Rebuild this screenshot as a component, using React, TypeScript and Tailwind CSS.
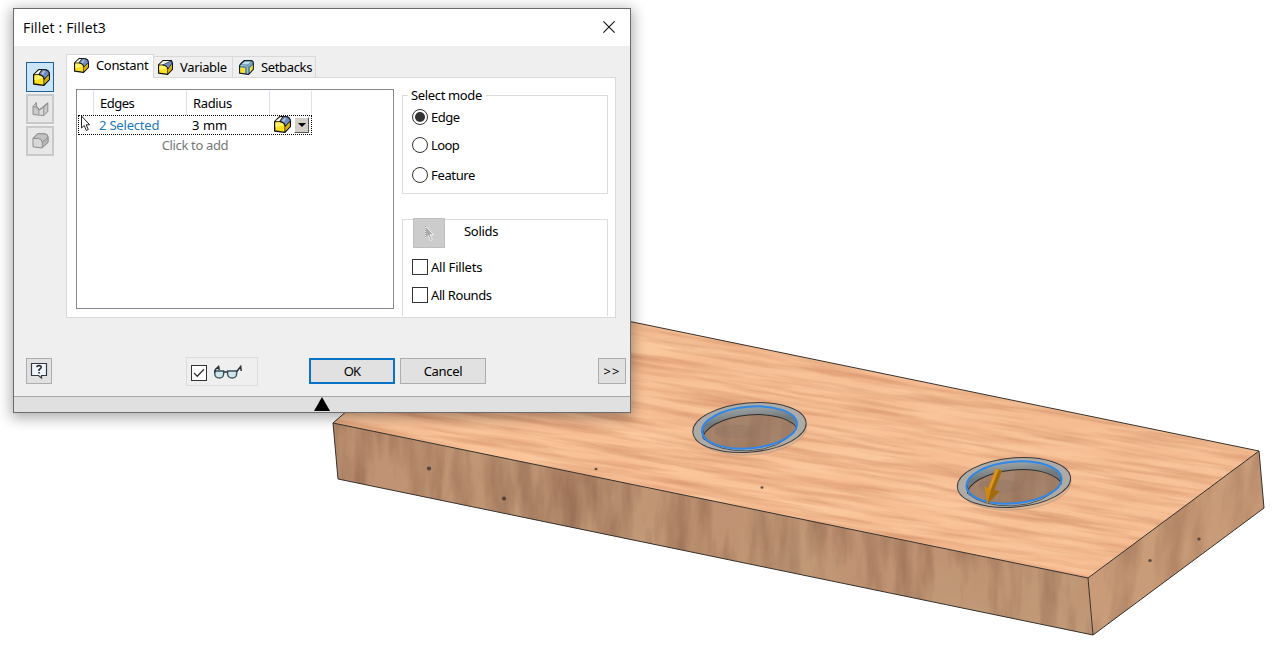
import type { ReactNode } from 'react';

type BlockKind = 'constant' | 'variable' | 'setback';

function BlockIcon({ kind = 'constant', size = 15 }: { kind?: BlockKind; size?: number }) {
  return (
    <svg width={size} height={size} viewBox="0 0 15 15" className="block shrink-0" strokeLinejoin="round">
      {kind === 'constant' && (
        <>
          <path d="M.6 5 5 .6H10.6Q14 1 14.4 4.4V9.4L9.6 14.4 .6 13.2Z" fill="#ffe21f" stroke="#111" strokeWidth="1.2" />
          <path d="M1.2 4.7 5.3 1.1H7.6L4.6 4.7Z" fill="#fffef0" />
          <path d="M5 4.8 8 .7H10.6Q13.9 1.1 14.4 4.4L9.9 9.2Q9.4 5.4 5 4.8Z" fill="#6f8dc0" stroke="#1d2433" strokeWidth=".9" />
          <path d="M7 4.5 9.2 1.6H10.8L8.8 5.4Z" fill="#aebfdd" />
          <path d="M.8 5H5Q9.700 5.4 9.700 9.400V14" fill="none" stroke="#111" strokeWidth=".8" />
          <path d="M1.3 5.8H5Q7.600 6.2 8.500 8.200L1.300 10Z" fill="#fff46a" />
          <path d="M10.300 9.600 13.700 6V9L10.300 12.700Z" fill="#d9ad00" />
        </>
      )}
      {kind === 'variable' && (
        <>
          <path d="M.6 5 5 .6H13.4L14.4 3V9.4L9.6 14.4 .6 13.2Z" fill="#ffe21f" stroke="#111" strokeWidth="1.2" />
          <path d="M4.200 4.800 13.200.8 14.2 3 9.900 9.200Q9.400 5.4 4.200 4.800Z" fill="#6f8dc0" stroke="#1d2433" strokeWidth=".9" />
          <path d="M1.2 4.700 5.300 1.1H12L4.200 4.700Z" fill="#f4f6ee" />
          <path d="M.8 5H4.500Q9.700 5.4 9.700 9.400V14" fill="none" stroke="#111" strokeWidth=".8" />
          <path d="M1.3 5.8H4.500Q7.600 6.2 8.500 8.200L1.300 10Z" fill="#fff46a" />
          <path d="M10.300 9.800 13.700 5V9L10.300 12.700Z" fill="#d9ad00" />
        </>
      )}
      {kind === 'setback' && (
        <>
          <path d="M.6 5.4Q1.4 3.8 5 .7H12Q14.3 1 14.3 3V9.4L9.6 14.4 .6 13.2Z" fill="#5f8ba5" stroke="#121e26" strokeWidth="1.2" />
          <path d="M2.600 4.300 6 1.4H12L9 4.4Z" fill="#c0dcea" />
          <path d="M1.2 7.400 6 7.900V13.200L1.2 12.600Z" fill="#ffe21f" />
          <path d="M11 8 13.700 5V9L11 12.200Z" fill="#ffe21f" />
          <path d="M1.4 5.6Q7.600 4.800 8.400 7.500V13.700M8.400 6.500 13.500 2.300" fill="none" stroke="#a8cbd8" strokeWidth=".9" />
        </>
      )}
    </svg>
  );
}

function GrayFace() {
  return (
    <svg width="17" height="16" viewBox="0 0 17 16" className="block" strokeLinejoin="round">
      <path d="M1 5.5 3 5.8Q5.5 7 7 9L12 6.2 15.8 1.8V10.6L11.7 14.6 1 13.5Z" fill="#c9c9c9" stroke="#8d8d8d" />
      <path d="M1 5.5 4.3 1.5V5.7Q6.5 5.5 7 9L15.5 2M11.7 6.4V14.4M4.2 6V3.2M7 9V13.6" fill="none" stroke="#8d8d8d" />
      <path d="M7.5 9.8 11.2 7.6V13.8L7.5 13.4Z" fill="#dadada" />
    </svg>
  );
}

function GrayRound() {
  return (
    <svg width="17" height="16" viewBox="0 0 17 16" className="block" strokeLinejoin="round">
      <path d="M1 5.4 5.4 .8 12.8.7Q16 1.2 16 4.2V9.4L10 15 1 13.8Z" fill="#d8d8d8" stroke="#8d8d8d" />
      <path d="M1.2 5.4 5.6 .8H12.8Q16 1.2 16 4.2L10.200 9.600Q9.900 5.800 6.500 5.500Z" fill="#c2c2c2" stroke="#8d8d8d" />
      <path d="M10.2 9.6V14.800L16 9.4V4.400Z" fill="#b5b5b5" stroke="#8d8d8d" strokeWidth=".8" />
    </svg>
  );
}

function Tab({ kind, active, className, children }: { kind: BlockKind; active?: boolean; className: string; children: ReactNode }) {
  return (
    <div
      className={`flex items-center border border-b-0 border-[#d9d9d9] ${active ? 'z-10 -mb-px h-6 bg-white pb-[3px]' : 'h-[21px] border-l-0 bg-[#efefef]'} ${className}`}
    >
      <BlockIcon kind={kind} />
      <span className="ml-[7px]">{children}</span>
    </div>
  );
}

function Radio({ label, checked, className = '' }: { label: string; checked?: boolean; className?: string }) {
  return (
    <label className={`flex h-4 items-center gap-[3px] ${className}`}>
      <span className="flex size-4 items-center justify-center rounded-full border border-[#333] bg-white">
        {checked && <span className="size-[10px] rounded-full bg-[#333]" />}
      </span>
      <span>{label}</span>
    </label>
  );
}

function Check({ label, className = '' }: { label: string; className?: string }) {
  return (
    <label className={`flex h-4 items-center gap-[3px] ${className}`}>
      <span className="size-4 border border-[#333] bg-white" />
      <span>{label}</span>
    </label>
  );
}

function Hole({ x, y, arrow }: { x: number; y: number; arrow?: boolean }) {
  return (
    <g transform={`translate(${x} ${y})`}>
      <ellipse cx="1" cy="2.5" rx="56" ry="25" transform="rotate(-4)" fill="#cdb096" fillOpacity=".6" stroke="#c09a78" strokeWidth=".7" />
      <ellipse rx="56.8" ry="24.6" transform="rotate(-5)" fill="#aeaaa5" stroke="#3c3c3c" strokeWidth="1" />
      <ellipse rx="48" ry="21" transform="rotate(-5)" fill="url(#bore)" />
      <clipPath id={`bore${x}`}>
        <ellipse rx="48" ry="21" transform="rotate(-5)" />
      </clipPath>
      <g clipPath={`url(#bore${x})`}>
        <ellipse cx="0" cy="9" rx="48" ry="21.5" transform="rotate(-5)" fill="#a6836b" stroke="#2e2e2e" strokeWidth="1" />
        <g clipPath="url(#lower)">
          <rect x="-50" y="-25" width="100" height="50" filter="url(#grainUp)" opacity=".3" />
        </g>
        <ellipse cx="-14" cy="4" rx="22" ry="7" fill="#83705f" opacity=".2" />
      </g>
      <path d="M-46.5 3V11M47-6V2" stroke="#333" />
      <path d="M-46.5 11Q-31 24-2 23.4 32 22 47 1" fill="none" stroke="#555" strokeWidth="1" />
      <ellipse rx="47.7" ry="20.8" transform="rotate(-5)" fill="none" stroke="#2f88e8" strokeWidth="2" />
      {arrow && (
        <g>
          <path d="M-18.5-14-12-12-19.5 7.5-14.5 9-26.5 21.5-29.5 4-26 5.5Z" fill="#cf880f" />
          <path d="M-15-13-12-12-19.5 7.5-14.5 9-26.5 21.5-23 7Z" fill="#a06a10" />
          <path d="M-17-13-24.5 7" stroke="#e0982a" strokeWidth="1.5" />
        </g>
      )}
    </g>
  );
}

const speckles: [number, number, number][] = [
  [429, 468.5, 2.1],
  [504, 498.5, 2.1],
  [596, 469, 1.5],
  [762, 487.5, 1.5],
  [1150, 560.5, 1.7],
  [1199, 539, 1.7],
];

function WoodBoard() {
  return (
    <svg width="1287" height="659" viewBox="0 0 1287 659" className="block">
      <defs>
        <filter id="grainLong" x="0" y="0" width="1" height="1" colorInterpolationFilters="sRGB">
          <feTurbulence type="fractalNoise" baseFrequency="0.009 0.16" numOctaves="5" seed="7" />
          <feColorMatrix values="0 0 0 0 .76  0 0 0 0 .48  0 0 0 0 .33  2.2 0 0 0 -.88" />
        </filter>
        <filter id="grainLight" x="0" y="0" width="1" height="1" colorInterpolationFilters="sRGB">
          <feTurbulence type="fractalNoise" baseFrequency="0.01 0.08" numOctaves="4" seed="22" />
          <feColorMatrix values="0 0 0 0 1  0 0 0 0 .85  0 0 0 0 .68  2 0 0 0 -.6" />
        </filter>
        <filter id="grainUp" x="0" y="0" width="1" height="1" colorInterpolationFilters="sRGB">
          <feTurbulence type="fractalNoise" baseFrequency="0.045 0.009" numOctaves="5" seed="4" />
          <feColorMatrix values="0 0 0 0 .47  0 0 0 0 .31  0 0 0 0 .23  2 0 0 0 -.75" />
        </filter>
        <filter id="patches" x="0" y="0" width="1" height="1" colorInterpolationFilters="sRGB">
          <feTurbulence type="fractalNoise" baseFrequency="0.012 0.012" numOctaves="4" seed="12" />
          <feColorMatrix values="0 0 0 0 .77  0 0 0 0 .65  0 0 0 0 .51  2.2 0 0 0 -.8" />
        </filter>
        <clipPath id="top"><path d="M333 423 485 291 630 321.5 1259 451 1088 578Z" /></clipPath>
        <clipPath id="front"><path d="M333 423 1088 578 1093 635 338 479Z" /></clipPath>
        <clipPath id="side"><path d="M1088 578 1259 451 1264 508 1093 635Z" /></clipPath>
        <clipPath id="lower"><ellipse cy="9" rx="48" ry="21.5" transform="rotate(-5)" /></clipPath>
        <linearGradient id="bore" x1="0" y1="0" x2="0" y2="1">
          <stop offset="0" stopColor="#a0a5a6" />
          <stop offset=".35" stopColor="#70787b" />
          <stop offset="1" stopColor="#8b8f90" />
        </linearGradient>
        <linearGradient id="topTone" x1="0" y1="1" x2="1" y2="0">
          <stop offset="0" stopColor="#fcc096" />
          <stop offset="1" stopColor="#f2b990" />
        </linearGradient>
      </defs>
      <g clipPath="url(#top)">
        <rect x="320" y="280" width="960" height="310" fill="url(#topTone)" />
        <g transform="rotate(9 333 423)">
          <rect x="300" y="100" width="1050" height="480" filter="url(#grainLight)" opacity=".45" />
          <rect x="300" y="100" width="1050" height="480" filter="url(#grainLong)" opacity=".5" />
        </g>
      </g>
      <g clipPath="url(#front)">
        <rect x="320" y="410" width="790" height="240" fill="#bf9373" />
        <rect x="320" y="410" width="790" height="240" filter="url(#patches)" opacity=".5" />
        <rect x="320" y="410" width="790" height="240" filter="url(#grainUp)" opacity=".5" />
      </g>
      <g clipPath="url(#side)">
        <rect x="1080" y="440" width="200" height="200" fill="#ca9b78" />
        <rect x="1080" y="440" width="200" height="200" filter="url(#patches)" opacity=".3" />
        <g transform="rotate(8 1090 600)">
          <rect x="1040" y="400" width="270" height="270" filter="url(#grainUp)" opacity=".4" />
        </g>
      </g>
      <path
        d="M338 479 333 423 485 291 630 321.5 1259 451 1264 508 1093 635ZM333 423 1088 578 1259 451M1088 578 1093 635"
        fill="none" stroke="#37312d" strokeWidth="1" strokeLinejoin="round"
      />
      {speckles.map(([x, y, r]) => (
        <ellipse key={x} cx={x} cy={y} rx={r} ry={r * 0.9} fill="#3b3431" opacity=".8" />
      ))}
      <Hole x={749.5} y={427.5} />
      <Hole x={1014} y={482.5} arrow />
    </svg>
  );
}

function TitleBar() {
  return (
    <header className="flex h-[37px] items-center justify-between bg-white pr-[15px] pl-[9px]">
      <h1 className="font-['Open_Sans','Noto_Sans',sans-serif] text-[14px] tracking-[0.17px] text-black">Fillet : Fillet3</h1>
      <svg width="12" height="12" viewBox="0 0 12 12" className="-mt-0.5 block">
        <path d="M.4.4 11.6 11.6M11.6.4.4 11.6" stroke="#111" strokeWidth="1.1" />
      </svg>
    </header>
  );
}

function EdgeList() {
  return (
    <section className="h-[220px] w-[318px] border border-[#828790] bg-white px-px pt-px">
      <div className="grid h-6 w-[234px] grid-cols-[16px_93px_83px_42px] items-stretch">
        <span className="border-r border-[#e2e2e2]" />
        <span className="flex items-center border-r border-[#e2e2e2] pl-[6px] tracking-[-0.5px]">Edges</span>
        <span className="flex items-center border-r border-[#e2e2e2] pl-[6px] tracking-[-0.35px]">Radius</span>
        <span className="border-r border-[#e2e2e2]" />
      </div>
      <div className="grid h-5 w-[234px] grid-cols-[15px_93px_87px_38px] items-center border border-dotted border-black">
        <svg width="11" height="17" viewBox="0 0 11 17" className="-mt-1 ml-px block">
          <path d="M1.5 1V13L4.2 10.5 6.3 15.5 8.3 14.5 6.2 9.8H9.7Z" fill="#fff" stroke="#222" />
        </svg>
        <span className="pl-[5px] tracking-[-0.2px] text-[#1b78bd]">2 Selected</span>
        <span className="pl-[5px] tracking-[-0.35px] [word-spacing:1px]">3 mm</span>
        <span className="-mt-0.5 flex items-center gap-[3px]">
          <BlockIcon size={17} />
          <span className="mt-px flex h-4 w-[15px] items-center justify-center border border-t-white border-r-[#555] border-b-[#555] border-l-white bg-[#d4d0c8]">
            <svg width="8" height="4" viewBox="0 0 8 4"><path d="M0 0H8L4 4Z" /></svg>
          </span>
        </span>
      </div>
      <p className="w-[234px] text-center leading-5 text-[#777]">Click to add</p>
    </section>
  );
}

function Options() {
  return (
    <div className="ml-2 flex w-[206px] flex-col pt-[6px]">
      <fieldset className="h-[99px] border border-[#dcdcdc] pl-[9px]">
        <div className="-mt-[10px] -ml-[4px] h-[18px] w-[78px] bg-white pl-[3px] leading-[18px]">Select mode</div>
        <Radio label="Edge" checked className="mt-[5px] tracking-[-0.5px]" />
        <Radio label="Loop" className="mt-3 tracking-[-0.6px]" />
        <Radio label="Feature" className="mt-[14px]" />
      </fieldset>
      <div className="mt-[25px] h-[97px] border border-b-0 border-[#dcdcdc] pl-[9px]">
        <div className="-mt-[2px] ml-px flex items-center gap-[19px]">
          <button className="flex h-[30px] w-8 items-center justify-center border border-[#bfbfbf] bg-[#cccccc]">
            <svg width="11" height="17" viewBox="0 0 11 17">
              <path d="M1.5 1V13L4.2 10.5 6.3 15.5 8.3 14.5 6.2 9.8H9.7Z" fill="#aaa" stroke="#f4f4f4" />
              <path d="M1.5 1V13L4.2 10.5" fill="none" stroke="#999" strokeDasharray="1 1" />
            </svg>
          </button>
          <span className="-mt-1 tracking-[-0.3px]">Solids</span>
        </div>
        <Check label="All Fillets" className="mt-[11px] tracking-[-0.2px]" />
        <Check label="All Rounds" className="mt-3 tracking-[-0.4px]" />
      </div>
    </div>
  );
}

function FilletDialog() {
  return (
    <div className="absolute top-2 left-[13px] flex h-[405px] w-[618px] flex-col border border-[#6b6b6b] bg-[#efefef] shadow-[0_3px_13px_2px_rgba(0,0,0,0.32)]">
      <TitleBar />
      <div className="flex h-[272px] pt-2 pl-3">
        <nav className="mr-3 flex flex-col gap-0.5 pt-2">
          <button className="flex h-[30px] w-7 items-center justify-center border border-[#1a5f9e] bg-[#cce4f7] pt-px pl-0.5"><BlockIcon size={17} /></button>
          <button className="flex h-[30px] w-7 items-center justify-center border-2 border-[#c9c9c9] bg-[#e7e7e7]"><GrayFace /></button>
          <button className="flex h-[30px] w-7 items-center justify-center border-2 border-[#c9c9c9] bg-[#e7e7e7]"><GrayRound /></button>
        </nav>
        <main>
          <div className="flex h-[23px] items-end">
            <Tab kind="constant" active className="w-[88px] pl-[7px]">Constant</Tab>
            <Tab kind="variable" className="w-[79px] pl-1">Variable</Tab>
            <Tab kind="setback" className="w-[83px] pl-[6px]">Setbacks</Tab>
          </div>
          <div className="flex h-[241px] w-[550px] border border-[#d9d9d9] bg-white pt-[11px] pl-[9px]">
            <EdgeList />
            <div className="-mt-[11px] pt-[11px]"><Options /></div>
          </div>
        </main>
      </div>
      <footer className="flex h-[78px] items-start pt-10 pl-3">
        <button className="flex size-[26px] items-center justify-center border border-[#adadad] bg-[#e1e1e1]">
          <svg width="18" height="18" viewBox="0 0 18 18" className="block">
            <path d="M1.5 1.5H16.5V13.5H11.5V16L8.5 13.5H1.5Z" fill="#f1f4f8" stroke="#343a44" strokeWidth="1.2" />
            <path d="M6.8 5.2Q7 3.5 9 3.5 11.3 3.6 11.2 5.3 11.1 6.5 9.1 7.7V9M9.1 10V11.6" fill="none" stroke="#232833" strokeWidth="1.6" />
          </svg>
        </button>
        <div className="-mt-px ml-[134px] flex h-[29px] w-[72px] items-center border border-[#dcdcdc] pl-1">
          <span className="mt-0.5 flex size-4 items-center justify-center border border-[#333] bg-white">
            <svg width="12" height="10" viewBox="0 0 12 10"><path d="M1 5 4.3 8.3 11 1.3" fill="none" stroke="#333" strokeWidth="1.3" /></svg>
          </span>
          <svg width="30" height="15" viewBox="0 0 30 15" className="mt-px ml-[6px] block">
            <path d="M1.8 6H10.6V9.5Q10 12.9 6.500 13 2.4 13 1.8 9.5ZM14.6 6H23.6V9.5Q23 12.9 19.3 13 15.2 13 14.6 9.5Z" fill="#cfe6ea" stroke="#39525e" strokeWidth="1.4" />
            <path d="M1.6 7.5 2.500 4.5 5.600 1.5 6.200 5M10.6 7H14.6M23.6 6.8 27.700 1.5 28.200 6" fill="none" stroke="#26333a" strokeWidth="1.5" />
          </svg>
        </div>
        <button className="ml-[51px] h-[26px] w-[86px] border-2 border-[#0a73c8] bg-[#e1e1e1]"><span className="tracking-[-0.9px]">OK</span></button>
        <button className="ml-[5px] h-[26px] w-[86px] border border-[#adadad] bg-[#e1e1e1]"><span className="tracking-[-0.3px]">Cancel</span></button>
        <button className="ml-[112px] h-[26px] w-7 border border-[#adadad] bg-[#e1e1e1] text-center"><span className="tracking-[1px]">&gt;&gt;</span></button>
      </footer>
      <div className="h-4 border-t border-[#a8a8a8] bg-[#e0e0e0] pl-[300px]">
        <svg width="16" height="14" viewBox="0 0 16 14" className="block"><path d="M8 0 16 14H0Z" /></svg>
      </div>
    </div>
  );
}

export default function App() {
  return (
    <div className="relative h-[659px] w-[1287px] overflow-hidden bg-white font-['Noto_Sans','DejaVu_Sans',sans-serif] text-[13px] leading-[18px] tracking-[-0.35px] text-black">
      <WoodBoard />
      <FilletDialog />
    </div>
  );
}
